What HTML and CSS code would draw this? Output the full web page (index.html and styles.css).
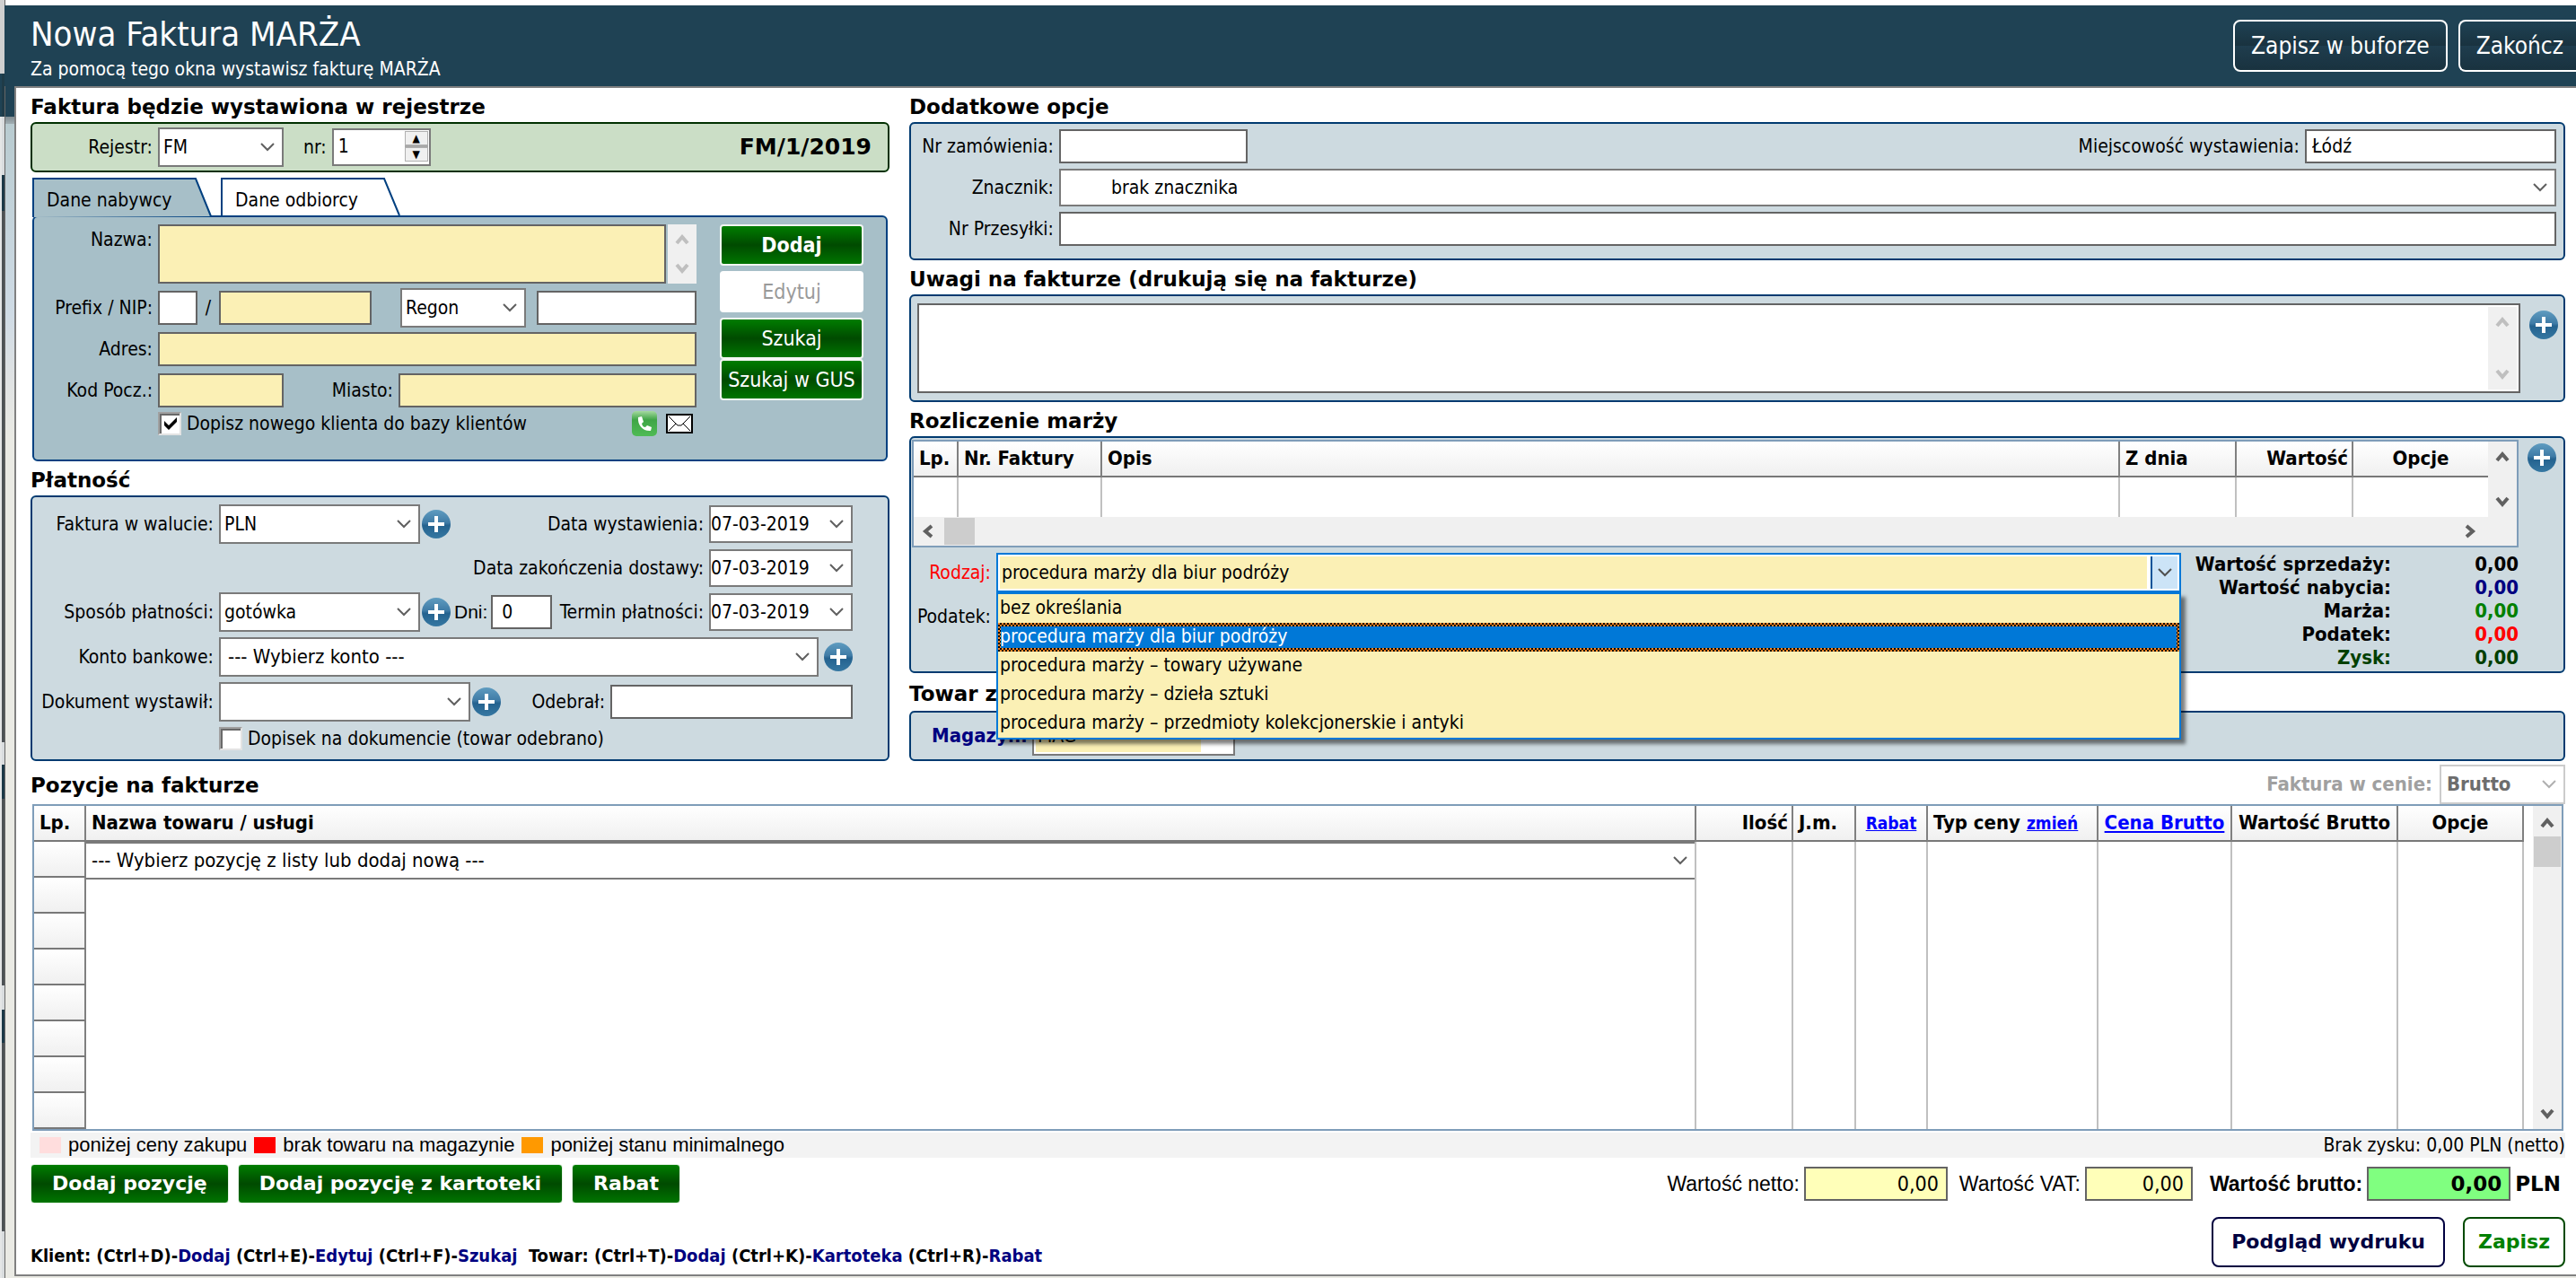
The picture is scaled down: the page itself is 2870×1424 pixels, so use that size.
FILE: index.html
```html
<!DOCTYPE html>
<html lang="pl">
<head>
    <meta charset="UTF-8">
    <meta name="viewport" content="width=device-width, initial-scale=1.0">
    <title>Nowa Faktura MARŻA</title>
    <link rel="stylesheet" href="styles.css">
</head>
<body>
    <!-- wspólne ikony -->
    <svg class="icons" aria-hidden="true">
        <defs>
            <linearGradient id="blue" x1="0" y1="0" x2="0" y2="1">
                <stop offset="0" stop-color="#5f9cc0"/>
                <stop offset="0.45" stop-color="#3f7ba6"/>
                <stop offset="0.55" stop-color="#24628f"/>
                <stop offset="1" stop-color="#3678a2"/>
            </linearGradient>
            <linearGradient id="green" x1="0" y1="0" x2="0" y2="1">
                <stop offset="0" stop-color="#a5d9a0"/>
                <stop offset="0.35" stop-color="#3fa546"/>
                <stop offset="1" stop-color="#4fbb55"/>
            </linearGradient>
        </defs>
        <symbol id="plus" viewBox="0 0 32 32">
            <circle cx="16" cy="16" r="16" fill="url(#blue)"/>
            <path d="M14 7h4v7h7v4h-7v7h-4v-7H7v-4h7z" fill="#fff"/>
        </symbol>
        <symbol id="up" viewBox="0 0 16 16">
            <path d="M2 13 8 6l6 7" fill="none" stroke="currentColor" stroke-width="4"/>
        </symbol>
        <symbol id="down" viewBox="0 0 16 16">
            <path d="M2 3l6 7 6-7" fill="none" stroke="currentColor" stroke-width="4"/>
        </symbol>
        <symbol id="left" viewBox="0 0 16 16">
            <path d="M12 2 5 8l7 6" fill="none" stroke="currentColor" stroke-width="4"/>
        </symbol>
        <symbol id="right" viewBox="0 0 16 16">
            <path d="M4 2l7 6-7 6" fill="none" stroke="currentColor" stroke-width="4"/>
        </symbol>
    </svg>

    <header class="top">
        <div>
            <h1>Nowa Faktura MARŻA</h1>
            <p>Za pomocą tego okna wystawisz fakturę MARŻA</p>
        </div>
        <div class="top-buttons">
            <button type="button">Zapisz w buforze</button>
            <button type="button" class="last">Zakończ</button>
        </div>
    </header>

    <main>
        <div class="columns">
            <!-- lewa kolumna -->
            <div class="column">
                <h2>Faktura będzie wystawiona w rejestrze</h2>
                <section class="panel register">
                    <label class="name" for="rejestr">Rejestr:</label>
                    <select id="rejestr" class="w140"><option>FM</option></select>
                    <label class="nr" for="nr">nr:</label>
                    <div class="spinner">
                        <input type="text" id="nr" value="1">
                        <div class="spin-buttons">
                            <button type="button" aria-label="więcej">▲</button>
                            <button type="button" aria-label="mniej">▼</button>
                        </div>
                    </div>
                    <strong class="number">FM/1/2019</strong>
                </section>

                <nav class="tabs">
                    <a href="#nabywca" class="tab">
                        <svg viewBox="0 0 200 44" aria-hidden="true"><path d="M1 44V1h181l17 42" fill="#a7bfc8" stroke="#004080" stroke-width="2"/></svg>
                        <span>Dane nabywcy</span>
                    </a>
                    <a href="#odbiorca" class="tab">
                        <svg viewBox="0 0 200 44" aria-hidden="true"><path d="M1 42V1h181l17 41" fill="#fff" stroke="#004080" stroke-width="2"/></svg>
                        <span>Dane odbiorcy</span>
                    </a>
                </nav>
                <section class="panel buyer" id="nabywca">
                    <div class="fields">
                        <div class="row tall">
                            <label class="name" for="nazwa">Nazwa:</label>
                            <textarea id="nazwa" class="yellow grow"></textarea>
                            <div class="scroll off">
                                <svg><use href="#up"/></svg>
                                <svg><use href="#down"/></svg>
                            </div>
                        </div>
                        <div class="row nip">
                            <label class="name" for="nip">Prefix / NIP:</label>
                            <input type="text" class="prefix" aria-label="Prefix">
                            <span class="slash">/</span>
                            <input type="text" id="nip" class="yellow w170">
                            <select class="w140 regon" aria-label="Rodzaj numeru"><option>Regon</option></select>
                            <input type="text" class="grow" aria-label="Regon">
                        </div>
                        <div class="row">
                            <label class="name" for="adres">Adres:</label>
                            <input type="text" id="adres" class="yellow grow">
                        </div>
                        <div class="row">
                            <label class="name" for="kod">Kod Pocz.:</label>
                            <input type="text" id="kod" class="yellow w140">
                            <label class="name city" for="miasto">Miasto:</label>
                            <input type="text" id="miasto" class="yellow grow">
                        </div>
                        <div class="row check">
                            <input type="checkbox" id="dopisz" checked>
                            <label for="dopisz">Dopisz nowego klienta do bazy klientów</label>
                            <svg class="phone" viewBox="0 0 28 28" aria-hidden="true">
                                <rect width="28" height="28" rx="5" fill="url(#green)"/>
                                <path d="M7 7l4-1 2 6-2 2c1 3 2 4 4 4l2-2 5 2-1 4C13 23 6 16 7 7z" fill="#fff"/>
                            </svg>
                            <svg class="mail" viewBox="0 0 30 22" aria-hidden="true">
                                <rect x="1" y="1" width="28" height="20" fill="#fff" stroke="#000" stroke-width="2"/>
                                <path d="M3 3l10 10h4L27 3M3 19l8-8M27 19l-8-8" fill="none" stroke="#000" stroke-width="1"/>
                            </svg>
                        </div>
                    </div>
                    <div class="buyer-buttons">
                        <button type="button" class="green bold">Dodaj</button>
                        <button type="button" class="disabled" disabled>Edytuj</button>
                        <button type="button" class="green">Szukaj</button>
                        <button type="button" class="green">Szukaj w GUS</button>
                    </div>
                </section>

                <h2>Płatność</h2>
                <section class="panel payment">
                    <div class="row">
                        <label class="name" for="waluta">Faktura w walucie:</label>
                        <select id="waluta" class="w224"><option>PLN</option></select>
                        <button type="button" class="plus" aria-label="Dodaj walutę"><svg><use href="#plus"/></svg></button>
                        <label class="push" for="data1">Data wystawienia:</label>
                        <input type="text" id="data1" class="date" value="07-03-2019">
                    </div>
                    <div class="row">
                        <label class="push" for="data2">Data zakończenia dostawy:</label>
                        <input type="text" id="data2" class="date" value="07-03-2019">
                    </div>
                    <div class="row">
                        <label class="name" for="sposob">Sposób płatności:</label>
                        <select id="sposob" class="w224"><option>gotówka</option></select>
                        <button type="button" class="plus" aria-label="Dodaj sposób płatności"><svg><use href="#plus"/></svg></button>
                        <label class="arial" for="dni">Dni:</label>
                        <input type="text" id="dni" class="days" value="0">
                        <label class="push" for="data3">Termin płatności:</label>
                        <input type="text" id="data3" class="date" value="07-03-2019">
                    </div>
                    <div class="row">
                        <label class="name" for="konto">Konto bankowe:</label>
                        <select id="konto" class="grow"><option>--- Wybierz konto ---</option></select>
                        <button type="button" class="plus" aria-label="Dodaj konto"><svg><use href="#plus"/></svg></button>
                    </div>
                    <div class="row">
                        <label class="name" for="wystawil">Dokument wystawił:</label>
                        <select id="wystawil" class="w280"><option></option></select>
                        <button type="button" class="plus" aria-label="Dodaj osobę"><svg><use href="#plus"/></svg></button>
                        <label class="push" for="odebral">Odebrał:</label>
                        <input type="text" id="odebral" class="w270">
                    </div>
                    <div class="row check">
                        <input type="checkbox" id="dopisek">
                        <label for="dopisek">Dopisek na dokumencie (towar odebrano)</label>
                    </div>
                </section>
            </div>

            <!-- prawa kolumna -->
            <div class="column">
                <h2>Dodatkowe opcje</h2>
                <section class="panel options">
                    <div class="row">
                        <label class="name" for="zamowienie">Nr zamówienia:</label>
                        <input type="text" id="zamowienie" class="w210">
                        <label class="push" for="miejscowosc">Miejscowość wystawienia:</label>
                        <input type="text" id="miejscowosc" class="w280" value="Łódź">
                    </div>
                    <div class="row">
                        <label class="name" for="znacznik">Znacznik:</label>
                        <select id="znacznik" class="grow marker"><option>brak znacznika</option></select>
                    </div>
                    <div class="row">
                        <label class="name" for="przesylka">Nr Przesyłki:</label>
                        <input type="text" id="przesylka" class="grow">
                    </div>
                </section>

                <h2><label for="uwagi">Uwagi na fakturze (drukują się na fakturze)</label></h2>
                <section class="panel notes">
                    <div class="notes-box">
                        <textarea id="uwagi"></textarea>
                        <div class="scroll off">
                            <svg><use href="#up"/></svg>
                            <svg><use href="#down"/></svg>
                        </div>
                    </div>
                    <button type="button" class="plus" aria-label="Dodaj uwagi"><svg><use href="#plus"/></svg></button>
                </section>

                <h2>Rozliczenie marży</h2>
                <section class="panel margin">
                    <div class="margin-top">
                        <div class="grid-box">
                            <div class="grid-view">
                                <table class="grid margin-grid">
                                    <colgroup>
                                        <col class="c-lp"><col class="c-nr"><col><col class="c-130"><col class="c-130"><col class="c-150">
                                    </colgroup>
                                    <thead>
                                        <tr><th>Lp.</th><th>Nr. Faktury</th><th>Opis</th><th>Z dnia</th><th class="right">Wartość</th><th class="center">Opcje</th></tr>
                                    </thead>
                                    <tbody>
                                        <tr><td></td><td></td><td></td><td></td><td></td><td></td></tr>
                                    </tbody>
                                </table>
                                <div class="scroll">
                                    <svg><use href="#up"/></svg>
                                    <svg><use href="#down"/></svg>
                                </div>
                            </div>
                            <div class="scroll-h">
                                <svg><use href="#left"/></svg>
                                <span class="thumb"></span>
                                <svg class="end"><use href="#right"/></svg>
                            </div>
                        </div>
                        <button type="button" class="plus" aria-label="Dodaj rozliczenie"><svg><use href="#plus"/></svg></button>
                    </div>
                    <div class="margin-bottom">
                        <div class="kind">
                            <div class="row">
                                <label class="name red" for="rodzaj">Rodzaj:</label>
                                <div class="combo">
                                    <select id="rodzaj"><option>procedura marży dla biur podróży</option></select>
                                    <ul class="list">
                                        <li>bez określania</li>
                                        <li class="active">procedura marży dla biur podróży</li>
                                        <li>procedura marży – towary używane</li>
                                        <li>procedura marży – dzieła sztuki</li>
                                        <li>procedura marży – przedmioty kolekcjonerskie i antyki</li>
                                    </ul>
                                </div>
                            </div>
                            <div class="row"><span class="name">Podatek:</span></div>
                        </div>
                        <dl class="sums">
                            <dt>Wartość sprzedaży:</dt><dd>0,00</dd>
                            <dt>Wartość nabycia:</dt><dd class="navy">0,00</dd>
                            <dt>Marża:</dt><dd class="lime">0,00</dd>
                            <dt>Podatek:</dt><dd class="red">0,00</dd>
                            <dt class="dark">Zysk:</dt><dd class="dark">0,00</dd>
                        </dl>
                    </div>
                </section>

                <h2 class="stock-title">Towar z</h2>
                <section class="panel stock">
                    <label for="magazyn">Magazyn:</label>
                    <select id="magazyn" class="yellow-select"><option>MAG</option></select>
                </section>
            </div>
        </div>

        <!-- pozycje -->
        <div class="items-head">
            <h2>Pozycje na fakturze</h2>
            <div class="price">
                <label for="cena">Faktura w cenie:</label>
                <select id="cena" disabled><option>Brutto</option></select>
            </div>
        </div>
        <div class="grid-box items">
            <div class="grid-view">
                <table class="grid items-grid">
                    <colgroup>
                        <col class="c-no"><col><col class="c-108"><col class="c-70"><col class="c-80"><col class="c-190"><col class="c-149"><col class="c-185"><col class="c-140">
                    </colgroup>
                    <thead>
                        <tr>
                            <th>Lp.</th>
                            <th>Nazwa towaru / usługi</th>
                            <th class="right">Ilość</th>
                            <th>J.m.</th>
                            <th class="center"><a href="#rabat" class="small">Rabat</a></th>
                            <th>Typ ceny <a href="#typ" class="small">zmień</a></th>
                            <th class="center"><a href="#cena">Cena Brutto</a></th>
                            <th class="center">Wartość Brutto</th>
                            <th class="center">Opcje</th>
                        </tr>
                    </thead>
                    <tbody>
                        <tr>
                            <td></td>
                            <td><select aria-label="Pozycja"><option>--- Wybierz pozycję z listy lub dodaj nową ---</option></select></td>
                            <td></td><td></td><td></td><td></td><td></td><td></td><td></td>
                        </tr>
                        <tr><td></td><td></td><td></td><td></td><td></td><td></td><td></td><td></td><td></td></tr>
                        <tr><td></td><td></td><td></td><td></td><td></td><td></td><td></td><td></td><td></td></tr>
                        <tr><td></td><td></td><td></td><td></td><td></td><td></td><td></td><td></td><td></td></tr>
                        <tr><td></td><td></td><td></td><td></td><td></td><td></td><td></td><td></td><td></td></tr>
                        <tr><td></td><td></td><td></td><td></td><td></td><td></td><td></td><td></td><td></td></tr>
                        <tr><td></td><td></td><td></td><td></td><td></td><td></td><td></td><td></td><td></td></tr>
                        <tr><td></td><td></td><td></td><td></td><td></td><td></td><td></td><td></td><td></td></tr>
                    </tbody>
                </table>
                <div class="scroll">
                    <svg><use href="#up"/></svg>
                    <span class="thumb"></span>
                    <svg class="end"><use href="#down"/></svg>
                </div>
            </div>
        </div>
        <div class="legend">
            <span class="box pink"></span><span>poniżej ceny zakupu</span>
            <span class="box crimson"></span><span>brak towaru na magazynie</span>
            <span class="box orange"></span><span>poniżej stanu minimalnego</span>
            <span class="profit">Brak zysku: 0,00 PLN (netto)</span>
        </div>

        <div class="actions">
            <button type="button" class="green">Dodaj pozycję</button>
            <button type="button" class="green">Dodaj pozycję z kartoteki</button>
            <button type="button" class="green">Rabat</button>
            <div class="totals">
                <label for="netto">Wartość netto:</label>
                <input type="text" id="netto" class="w160" value="0,00" readonly>
                <label for="vat">Wartość VAT:</label>
                <input type="text" id="vat" class="w120" value="0,00" readonly>
                <label for="brutto" class="strong">Wartość brutto:</label>
                <input type="text" id="brutto" class="w160 gross" value="0,00" readonly>
                <strong>PLN</strong>
            </div>
        </div>

        <footer>
            <p>Klient: (Ctrl+D)-<b>Dodaj</b> (Ctrl+E)-<b>Edytuj</b> (Ctrl+F)-<b>Szukaj</b>&nbsp; Towar: (Ctrl+T)-<b>Dodaj</b> (Ctrl+K)-<b>Kartoteka</b> (Ctrl+R)-<b>Rabat</b></p>
            <div class="footer-buttons">
                <button type="button" class="preview">Podgląd wydruku</button>
                <button type="button" class="save">Zapisz</button>
            </div>
        </footer>
    </main>
</body>
</html>
```
FILE: styles.css
```css
* {
    box-sizing: border-box;
}

body {
    margin: 0;
    padding-top: 6px;
    min-height: 100vh;
    display: flex;
    flex-direction: column;
    font-family: 'DejaVu Sans Condensed', 'DejaVu Sans', sans-serif;
    font-size: 21px;
    line-height: 26px;
    color: #000;
    /* okno programu widoczne z lewej strony */
    background:
        linear-gradient(#cfcfcf 82px, #1f3b48 82px, #1f3b48 130px, #d9dcde 130px, #d9dcde 195px, #1c3947 195px, #1c3947 235px, #4d5255 235px, #4d5255 827px, #d9dcde 827px, #d9dcde 852px, #1c3947 852px, #1c3947 890px, #4d5255 890px, #4d5255 1098px, #d9dcde 1098px, #d9dcde 1125px, #1c3947 1125px, #1c3947 1162px, #4d5255 1162px, #4d5255 1372px, #d9dcde 1372px) no-repeat 2px 0 / 3px 100%,
        linear-gradient(#d0d0d0 82px, #1f4254 82px, #1f4254 130px, #e4e6e6 130px) no-repeat 0 0 / 2px 100%,
        linear-gradient(#666, #666) no-repeat 5px 0 / 1px 100%,
        linear-gradient(#fff 6px, #1f4254 6px, #1f4254 130px, #808c91 130px, #a0adb2 138px, #b8cbd0 138px, #cfdbe5 350px, #dfe2e3 420px, #eaeae4 490px);
}

h1, h2, p, ul, dl, dd {
    margin: 0;
    padding: 0;
}

button, input, select, textarea {
    font: inherit;
    color: inherit;
    margin: 0;
    border-radius: 0;
}

.icons {
    position: absolute;
    width: 0;
    height: 0;
}

/* nagłówek okna */
.top {
    display: flex;
    justify-content: space-between;
    height: 90px;
    margin-left: 5px;
    padding: 6px 0 0 29px;
    background: #1f4254;
    color: #fff;
}

.top h1 {
    font-size: 38px;
    line-height: 52px;
    font-weight: normal;
}

.top-buttons {
    display: flex;
    gap: 12px;
    padding-top: 10px;
}

.top-buttons button {
    height: 58px;
    padding: 0 18px;
    font-size: 26px;
    border: 2px solid #fff;
    border-radius: 8px;
    background: linear-gradient(#1f4254, #19323f 50%, #1f3d4e 50%, #19323f);
}

.top-buttons .last {
    padding-right: 14px;
    border-right: 0;
    border-radius: 8px 0 0 8px;
}

main {
    flex: 1;
    margin: 0 0 2px 16px;
    padding: 4px 12px 8px 16px;
    display: flex;
    flex-direction: column;
    background: #fff;
    border: 2px solid #808080;
    border-right: 0;
}

h2 {
    font-family: 'DejaVu Sans', sans-serif;
    font-size: 23px;
    line-height: 30px;
}

.columns {
    display: grid;
    grid-template-columns: minmax(0, 957px) minmax(0, 1fr);
    gap: 22px;
}

.column {
    display: flex;
    flex-direction: column;
}

.column h2 {
    height: 38px;
    padding-top: 6px;
}

.column h2:first-child {
    height: 34px;
    padding-top: 2px;
}

.column .stock-title {
    height: 42px;
    padding-top: 8px;
}

.panel {
    border: 2px solid #003a70;
    border-radius: 6px;
    background: #cddae0;
}

.row {
    display: flex;
    align-items: center;
}

.name {
    text-align: right;
    padding-right: 6px;
    flex: none;
    white-space: nowrap;
}

.grow {
    flex: 1;
    min-width: 0;
}

/* pola */
input[type="text"], textarea {
    height: 38px;
    padding: 0 6px;
    border: 2px solid #646464;
    background: #fff;
    outline: none;
}

textarea {
    display: block;
    resize: none;
}

select, input[type="text"].date {
    appearance: none;
    height: 44px;
    padding: 0 36px 0 4px;
    border: 2px solid #7a7a7a;
    background: #fff url("data:image/svg+xml,%3Csvg xmlns='http://www.w3.org/2000/svg' viewBox='0 0 16 10'%3E%3Cpath d='M1 1l7 7 7-7' fill='none' stroke='%23606060' stroke-width='2'/%3E%3C/svg%3E") no-repeat right 8px center / 16px 10px;
    opacity: 1;
}

input[type="text"].date {
    width: 160px;
    height: 42px;
    padding: 0;
}

input[type="text"].yellow, textarea.yellow {
    background: #fbf0b5;
}

input[type="checkbox"] {
    appearance: none;
    flex: none;
    width: 26px;
    height: 26px;
    background: #fff;
    border: 2px solid;
    border-color: #a0a0a0 #e3e3e3 #e3e3e3 #a0a0a0;
    box-shadow: inset 2px 2px #696969;
}

input[type="checkbox"]:checked {
    background: #fff url("data:image/svg+xml,%3Csvg xmlns='http://www.w3.org/2000/svg' viewBox='0 0 14 14'%3E%3Cpath d='M0 4l5 5 9-9v5l-9 9-5-5z' fill='%23000'/%3E%3C/svg%3E") no-repeat 5px 4px / 14px 14px;
}

.w120 { width: 120px; }
.w140 { width: 140px; }
.w160 { width: 160px; }
.w170 { width: 170px; }
.w210 { width: 210px; }
.w224 { width: 224px; }
.w270 { width: 270px; }
.w280 { width: 280px; }

.green {
    color: #fff;
    border: 1px solid #e6f2e6;
    border-radius: 4px;
    background: linear-gradient(#007d00, #004a00 50%, #007500);
}

.plus {
    flex: none;
    width: 32px;
    height: 32px;
    padding: 0;
    border: 0;
    background: none;
}

.plus svg {
    display: block;
    width: 32px;
    height: 32px;
}

/* rejestr */
.register {
    display: flex;
    align-items: center;
    height: 56px;
    border-color: #003000;
    background: #cbdec6;
}

.register .name {
    width: 140px;
}

.nr {
    padding: 0 6px 0 22px;
}

.spinner {
    display: flex;
    width: 110px;
    height: 42px;
    padding: 1px;
    border: 2px solid #7a7a7a;
    background: #fff;
}

.spinner input[type="text"] {
    flex: 1;
    min-width: 0;
    height: 34px;
    padding: 0 4px;
    border: 0;
}

.spin-buttons {
    display: flex;
    flex-direction: column;
    width: 26px;
    height: 34px;
    gap: 2px;
    background: #a8a8a8;
}

.spin-buttons button {
    flex: 1;
    padding: 0;
    font-size: 12px;
    line-height: 12px;
    border: 1px solid #b0b0b0;
    background: #f0f0f0;
}

.number {
    margin-left: auto;
    padding-right: 18px;
    font-family: 'DejaVu Sans', sans-serif;
    font-size: 25px;
}

/* zakładki */
.tabs {
    display: flex;
    gap: 10px;
    padding: 6px 0 0 2px;
}

.tab {
    position: relative;
    width: 200px;
    height: 42px;
    color: #000;
    text-decoration: none;
    z-index: 1;
}

.tab svg {
    position: absolute;
    top: 0;
    left: 0;
    width: 200px;
    height: 44px;
}

.tab span {
    position: relative;
    display: block;
    padding: 12px 0 0 16px;
}

.buyer {
    display: flex;
    height: 274px;
    margin: 0 2px;
    padding: 8px 25px 0 0;
    border-color: #004080;
    background: #a7bfc8;
}

.fields {
    flex: 1;
    min-width: 0;
    display: flex;
    flex-direction: column;
    gap: 8px;
}

.fields .name {
    width: 138px;
}

.fields .city {
    width: 128px;
}

.tall {
    align-items: flex-start;
    height: 66px;
}

.tall .name {
    padding-top: 4px;
}

.tall textarea {
    height: 66px;
}

.nip {
    height: 38px;
}

.prefix {
    width: 44px;
}

.slash {
    width: 24px;
    text-align: center;
}

.regon {
    margin: 0 12px 0 32px;
}

.fields .check {
    margin-top: -4px;
    padding-left: 138px;
}

.check label {
    padding-left: 6px;
}

.phone {
    width: 28px;
    height: 28px;
    margin-left: auto;
}

.mail {
    width: 30px;
    height: 22px;
    margin: 0 4px 0 10px;
}

.buyer-buttons {
    display: flex;
    flex: none;
    flex-direction: column;
    width: 160px;
    margin-left: 26px;
}

.buyer-buttons button {
    height: 46px;
    padding: 0;
    white-space: nowrap;
    font-size: 23px;
    border: 2px solid #f2f6f2;
}

.buyer-buttons .bold {
    font-weight: bold;
}

.buyer-buttons .disabled {
    margin: 6px 0;
    color: #9a9a9a;
    border: 0;
    border-radius: 4px;
    background: #fff;
}

/* suwaki */
.scroll {
    display: flex;
    flex-direction: column;
    justify-content: space-between;
    align-items: center;
    flex: none;
    width: 32px;
    padding: 8px 0;
    color: #606060;
    background: #f0f0f0;
}

.scroll svg, .scroll-h svg {
    width: 16px;
    height: 16px;
}

.off {
    color: #bfbfbf;
}

.tall .scroll {
    height: 66px;
    margin-left: 2px;
}

/* płatność */
.payment {
    display: flex;
    flex-direction: column;
    gap: 6px;
    height: 296px;
    padding: 8px 39px 0 0;
}

.payment .row {
    height: 44px;
}

.payment .name {
    width: 208px;
}

.payment .plus {
    margin-left: 2px;
}

.payment .grow {
    padding-left: 8px;
    font-size: 22px;
}

.payment .grow + .plus {
    margin-left: 6px;
}

.push {
    margin-left: auto;
    padding-right: 6px;
}

.payment .row:nth-child(2) {
    height: 42px;
}

.arial {
    font-family: 'Liberation Sans', sans-serif;
    padding: 0 4px;
}

input[type="text"].days {
    width: 68px;
    padding: 0 10px;
}

.payment .check {
    height: 26px;
    padding-left: 208px;
}

/* opcje */
.options {
    display: flex;
    flex-direction: column;
    gap: 6px;
    height: 154px;
    padding: 6px 8px 0 0;
}

.options .name {
    width: 165px;
}

.options select {
    height: 42px;
}

.options .marker {
    padding-left: 56px;
}

.notes {
    display: flex;
    height: 120px;
    padding: 8px 6px 8px 7px;
}

.notes-box {
    display: flex;
    flex: 1;
    padding: 2px;
    margin-right: 10px;
    border: 2px solid #646464;
    background: #fff;
}

.notes-box textarea {
    flex: 1;
    height: 92px;
    border: 0;
}

.notes .plus {
    margin-top: 8px;
}

/* tabele */
.grid-box {
    border: 2px solid #7f9db9;
    background: #fff;
}

.grid-view {
    display: flex;
}

.grid {
    flex: 1;
    min-width: 0;
    table-layout: fixed;
    border-collapse: separate;
    border-spacing: 0;
}

.grid th {
    height: 40px;
    padding: 0 6px;
    text-align: left;
    white-space: nowrap;
    font-size: 22px;
    border-right: 2px solid #808080;
    border-bottom: 2px solid #787878;
    background: linear-gradient(#fff, #f0f0f0);
}

.grid td {
    height: 40px;
    padding: 0;
    border-right: 2px solid #c0c0c0;
}

.grid .right {
    text-align: right;
    padding-right: 4px;
}

.grid .center {
    text-align: center;
    padding: 0;
}

.grid a {
    color: #0000ff;
}

.grid .small {
    font-size: 19px;
}

.margin {
    height: 264px;
    padding: 2px 8px 0 1px;
}

.margin-top {
    display: flex;
    gap: 10px;
}

.margin-top .grid-box {
    flex: 1;
}

.margin-top .plus {
    margin-top: 4px;
}

.margin-grid td {
    height: 44px;
}

.margin-grid th:last-child, .margin-grid td:last-child {
    border-right: 0;
}

.c-lp { width: 50px; }
.c-nr { width: 160px; }
.c-130 { width: 130px; }
.c-150 { width: 150px; }

.scroll-h {
    display: flex;
    align-items: center;
    height: 32px;
    padding: 0 44px 0 8px;
    color: #606060;
    background: #f0f0f0;
}

.scroll-h .thumb {
    width: 34px;
    height: 30px;
    margin-left: 10px;
    background: #cdcdcd;
}

.scroll-h .end {
    margin-left: auto;
}

.margin-bottom {
    display: flex;
    padding-top: 6px;
}

.kind {
    flex: 1;
    display: flex;
    flex-direction: column;
    gap: 14px;
}

.kind .name {
    width: 94px;
}

.red { color: #ff0000; }
.navy { color: #000080; }
.lime { color: #008000; }
.dark { color: #004000; }

.combo {
    position: relative;
    flex: 1;
}

.combo select {
    display: block;
    width: 100%;
    border: 2px solid #0078d7;
    box-shadow: inset 0 0 0 2px #fff;
    background:
        url("data:image/svg+xml,%3Csvg xmlns='http://www.w3.org/2000/svg' viewBox='0 0 16 10'%3E%3Cpath d='M1 1l7 7 7-7' fill='none' stroke='%23505050' stroke-width='2'/%3E%3C/svg%3E") no-repeat right 8px center / 16px 10px,
        linear-gradient(90deg, #fff 4px, #005499 4px, #005499 6px, #cce4f7 6px) no-repeat right / 36px 100%,
        #fbf0b5;
}

/* rozwinięta lista */
.list {
    position: absolute;
    top: 100%;
    left: 0;
    right: 0;
    z-index: 2;
    list-style: none;
    border: 2px solid #0078d7;
    background: #fbf0b5;
    box-shadow: 5px 5px 4px rgba(0, 0, 0, 0.5);
}

.list li {
    height: 32px;
    padding: 0 2px;
    line-height: 30px;
}

.list .active {
    padding: 4px 2px;
    line-height: 22px;
    color: #fff;
    background:
        linear-gradient(#0078d7, #0078d7) no-repeat center / calc(100% - 6px) 24px,
        repeating-conic-gradient(#000 0 25%, #ff8728 0 50%) 0 0 / 4px 4px;
}

.sums {
    display: grid;
    grid-template-columns: 234px 142px;
    margin-right: 42px;
    text-align: right;
    font-size: 22px;
    font-weight: bold;
}

.stock {
    display: flex;
    align-items: center;
    height: 56px;
    padding-left: 23px;
}

.stock label {
    width: 112px;
    font-size: 22px;
    font-weight: bold;
    color: #000080;
}

.yellow-select {
    width: 226px;
    background:
        url("data:image/svg+xml,%3Csvg xmlns='http://www.w3.org/2000/svg' viewBox='0 0 16 10'%3E%3Cpath d='M1 1l7 7 7-7' fill='none' stroke='%23606060' stroke-width='2'/%3E%3C/svg%3E") no-repeat right 8px center / 16px 10px,
        linear-gradient(#fbf0b5, #fbf0b5) no-repeat 2px 2px / 184px 36px,
        #fff;
}

/* pozycje */
.items-head {
    display: flex;
    justify-content: space-between;
    height: 48px;
    padding-top: 4px;
}

.items-head h2 {
    padding-top: 8px;
}

.price {
    display: flex;
    align-items: center;
    height: 44px;
    font-size: 22px;
    font-weight: bold;
    color: #a0a0a0;
}

.price select {
    width: 140px;
    margin-left: 8px;
    padding-left: 6px;
    color: #6d6d6d;
    border-color: #cccccc;
    background-image: url("data:image/svg+xml,%3Csvg xmlns='http://www.w3.org/2000/svg' viewBox='0 0 16 10'%3E%3Cpath d='M1 1l7 7 7-7' fill='none' stroke='%23b0b0b0' stroke-width='2'/%3E%3C/svg%3E");
}

.items {
    margin: 0 2px;
}

.items-grid td:first-child {
    border-right-color: #808080;
    border-bottom: 2px solid #787878;
    background: linear-gradient(#fff, #f0f0f0);
}

.items-grid td select {
    display: block;
    width: 100%;
    height: 42px;
    margin-bottom: -2px;
    padding-left: 6px;
    font-size: 22px;
    border-left: 0;
    border-right: 0;
}

.c-no { width: 58px; }
.c-70 { width: 70px; }
.c-80 { width: 80px; }
.c-108 { width: 108px; }
.c-140 { width: 140px; }
.c-149 { width: 149px; }
.c-185 { width: 185px; }
.c-190 { width: 190px; }

.items .scroll {
    justify-content: flex-start;
    margin-left: 10px;
    padding-top: 10px;
}

.items .thumb {
    width: 30px;
    height: 34px;
    margin-top: 8px;
    background: #cdcdcd;
}

.items .end {
    margin-top: auto;
}

.legend {
    display: flex;
    align-items: center;
    gap: 8px;
    height: 28px;
    margin-top: 2px;
    padding-left: 10px;
    background: #f3f3f3;
    font-family: 'Liberation Sans', sans-serif;
    font-size: 22px;
}

.box {
    width: 24px;
    height: 18px;
}

.pink { background: #ffdddd; }
.crimson { background: #ff0000; }
.orange { background: #ff9900; }

.profit {
    margin-left: auto;
    font-family: 'DejaVu Sans Condensed', 'DejaVu Sans', sans-serif;
    font-size: 21px;
}

.actions {
    display: flex;
    gap: 10px;
    padding-top: 7px;
}

.actions button {
    height: 44px;
    padding: 0 23px;
    font-family: 'DejaVu Sans', sans-serif;
    font-size: 22px;
    font-weight: bold;
}

.totals {
    display: flex;
    align-items: center;
    gap: 5px;
    margin-left: auto;
    padding-right: 5px;
    font-size: 23px;
}

.totals label {
    margin-left: 8px;
    font-family: 'Liberation Sans', sans-serif;
}

.totals .strong {
    margin-left: 14px;
    font-weight: bold;
}

.totals input[type="text"] {
    text-align: right;
    padding-right: 8px;
    background: #ffffb9;
}

.totals .gross[type="text"] {
    font-family: 'DejaVu Sans', sans-serif;
    font-weight: bold;
    background: #80ff80;
}

.totals strong {
    font-family: 'DejaVu Sans', sans-serif;
}

footer {
    display: flex;
    justify-content: space-between;
    align-items: flex-end;
    margin-top: auto;
}

footer p {
    font-size: 20px;
    font-weight: bold;
}

footer b {
    color: #000080;
}

.footer-buttons {
    display: flex;
    gap: 20px;
}

.footer-buttons button {
    height: 56px;
    padding: 0 20px;
    font-family: 'DejaVu Sans', sans-serif;
    font-size: 22px;
    font-weight: bold;
    background: #fff;
    border: 2px solid #000040;
    border-radius: 8px;
    color: #000040;
}

.footer-buttons .save {
    padding: 0 15px;
    color: #008000;
    border-color: #004a00;
}
```
